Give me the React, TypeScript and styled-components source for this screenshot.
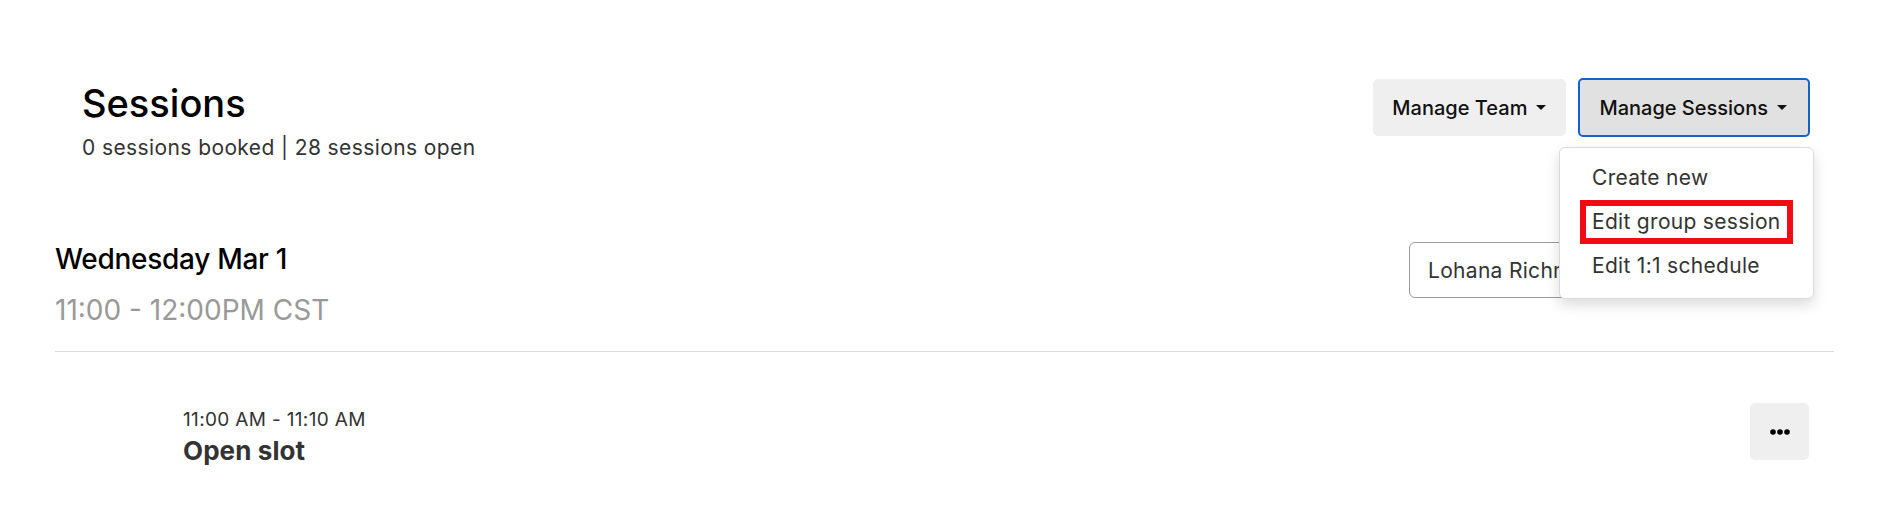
import React from "react";
import styled, { createGlobalStyle } from "styled-components";

const Global = createGlobalStyle`
  html, body { margin: 0; padding: 0; background: #fff; }
  body { font-family: Inter, "Noto Sans", "Liberation Sans", sans-serif; color: #111; }
  * { box-sizing: border-box; }
`;

const Page = styled.div`
  padding: 78px 58px 0 55px;
`;

const Header = styled.header`
  display: flex;
  justify-content: space-between;
  align-items: flex-start;
  padding: 0 24px 0 27px;
`;

const TitleBlock = styled.div`
  display: flex;
  flex-direction: column;
  gap: 9px;
  margin-top: 3px;
`;

const Title = styled.h1`
  margin: 0;
  font-size: 38px;
  line-height: 44px;
  font-weight: 500;
  color: #000;
  letter-spacing: 0;
`;

const Subtitle = styled.div`
  font-size: 21px;
  line-height: 28px;
  letter-spacing: 0.4px;
  color: #333;
`;

const Actions = styled.div`
  display: flex;
  align-items: center;
  gap: 12px;
`;

const MenuAnchor = styled.div`
  position: relative;
`;

const ActionButton = styled.button<{ $active?: boolean }>`
  display: flex;
  align-items: center;
  gap: 9px;
  height: ${(p) => (p.$active ? "59px" : "57px")};
  padding: 0 ${(p) => (p.$active ? "21px" : "20px")} 0 19px;
  border: ${(p) => (p.$active ? "2px solid #1462d0" : "none")};
  border-radius: 5px;
  background: ${(p) => (p.$active ? "#e1e1e1" : "#efefef")};
  font-family: inherit;
  font-size: 20px;
  font-weight: 500;
  color: #111;
  cursor: pointer;
`;

const Caret = styled.span`
  width: 0;
  height: 0;
  border-left: 5px solid transparent;
  border-right: 5px solid transparent;
  border-top: 5px solid #111;
`;

const Dropdown = styled.div`
  position: absolute;
  top: calc(100% + 10px);
  right: -4px;
  width: 255px;
  padding: 8px 0 10px;
  background: #fff;
  border: 1px solid #dcdcdc;
  border-radius: 6px;
  box-shadow: 0 6px 14px rgba(0, 0, 0, 0.14);
  z-index: 10;
  display: flex;
  flex-direction: column;
`;

const MenuItem = styled.div<{ $highlight?: boolean }>`
  margin: 0 20px;
  padding: 0 12px 2px;
  height: 44px;
  display: flex;
  align-items: center;
  font-size: 21px;
  letter-spacing: 0.3px;
  color: #333;
  white-space: nowrap;
  box-shadow: ${(p) => (p.$highlight ? "inset 0 0 0 6px #f20a14" : "none")};
`;

const DateSection = styled.section`
  display: flex;
  justify-content: space-between;
  align-items: flex-start;
  margin-top: 79px;
  padding: 0 26px 23px 0;
  border-bottom: 1px solid #dedede;
`;

const DateBlock = styled.div`
  display: flex;
  flex-direction: column;
  gap: 15px;
`;

const DateTitle = styled.h2`
  margin: 0;
  font-size: 28px;
  line-height: 36px;
  font-weight: 500;
  color: #000;
  letter-spacing: -0.3px;
`;

const TimeRange = styled.div`
  font-size: 28px;
  line-height: 36px;
  color: #999;
`;

const Select = styled.div`
  margin-top: 1px;
  width: 399px;
  height: 56px;
  border: 1px solid #9a9a9a;
  border-radius: 6px;
  display: flex;
  align-items: center;
  justify-content: space-between;
  padding: 0 18px;
  font-size: 21px;
  letter-spacing: 0.3px;
  color: #333;
`;

const SlotRow = styled.div`
  display: flex;
  justify-content: space-between;
  align-items: flex-start;
  padding: 51px 25px 0 128px;
`;

const SlotInfo = styled.div`
  display: flex;
  flex-direction: column;
  gap: 3px;
  margin-top: 5px;
`;

const SlotTime = styled.div`
  font-size: 19px;
  line-height: 24px;
  letter-spacing: 0.34px;
  color: #333;
`;

const SlotTitle = styled.div`
  font-size: 26px;
  line-height: 32px;
  font-weight: 700;
  letter-spacing: 0.1px;
  color: #333;
`;

const MoreButton = styled.button`
  width: 59px;
  height: 57px;
  border: none;
  border-radius: 5px;
  background: #efefef;
  display: flex;
  align-items: center;
  justify-content: center;
  cursor: pointer;
`;

export default function App() {
  return (
    <>
      <Global />
      <Page>
        <Header>
          <TitleBlock>
            <Title>Sessions</Title>
            <Subtitle>0 sessions booked | 28 sessions open</Subtitle>
          </TitleBlock>
          <Actions>
            <ActionButton>
              Manage Team <Caret />
            </ActionButton>
            <MenuAnchor>
              <ActionButton $active>
                Manage Sessions <Caret />
              </ActionButton>
              <Dropdown>
                <MenuItem>Create new</MenuItem>
                <MenuItem $highlight>Edit group session</MenuItem>
                <MenuItem>Edit 1:1 schedule</MenuItem>
              </Dropdown>
            </MenuAnchor>
          </Actions>
        </Header>
        <DateSection>
          <DateBlock>
            <DateTitle>Wednesday Mar 1</DateTitle>
            <TimeRange>11:00 - 12:00PM CST</TimeRange>
          </DateBlock>
          <Select>
            Lohana Richmond <Caret />
          </Select>
        </DateSection>
        <SlotRow>
          <SlotInfo>
            <SlotTime>11:00 AM - 11:10 AM</SlotTime>
            <SlotTitle>Open slot</SlotTitle>
          </SlotInfo>
          <MoreButton aria-label="More">
            <svg width="20" height="6" viewBox="0 0 20 6">
              <circle cx="3" cy="3" r="2.8" fill="#000" />
              <circle cx="10" cy="3" r="2.8" fill="#000" />
              <circle cx="17" cy="3" r="2.8" fill="#000" />
            </svg>
          </MoreButton>
        </SlotRow>
      </Page>
    </>
  );
}
